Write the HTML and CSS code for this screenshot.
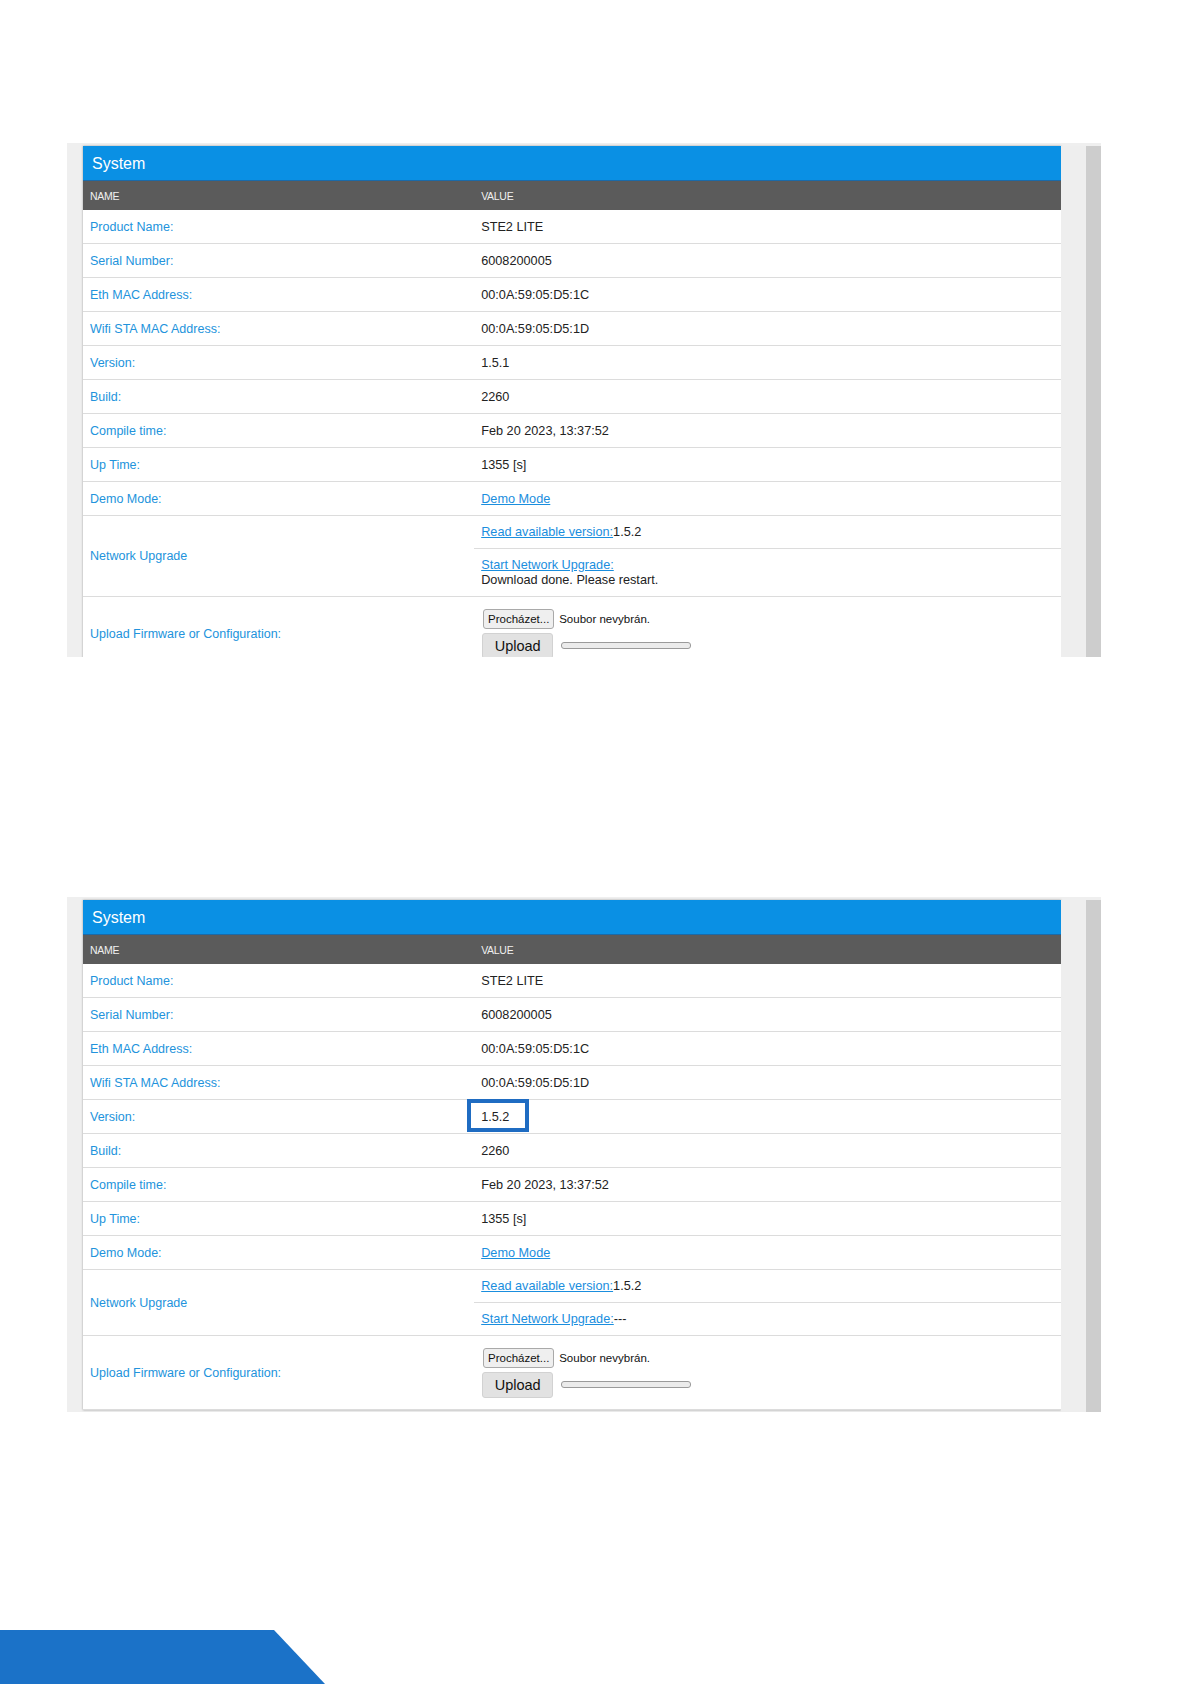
FILE: index.html
```html
<!DOCTYPE html>
<html lang="en">
<head>
  <meta charset="UTF-8" />
  <title>System</title>
  <link rel="stylesheet" href="styles.css">
</head>
<body>
<div class="page">

  <!-- screenshot 1: after network download -->
  <div class="shot shot-top">
    <div class="panel">
      <div class="panel-title">System</div>
      <div class="row head"><div class="cell">NAME</div><div class="cell">VALUE</div></div>
      <div class="row"><div class="cell name">Product Name:</div><div class="cell">STE2 LITE</div></div>
      <div class="row"><div class="cell name">Serial Number:</div><div class="cell">6008200005</div></div>
      <div class="row"><div class="cell name">Eth MAC Address:</div><div class="cell">00:0A:59:05:D5:1C</div></div>
      <div class="row"><div class="cell name">Wifi STA MAC Address:</div><div class="cell">00:0A:59:05:D5:1D</div></div>
      <div class="row"><div class="cell name">Version:</div><div class="cell">1.5.1</div></div>
      <div class="row"><div class="cell name">Build:</div><div class="cell">2260</div></div>
      <div class="row"><div class="cell name">Compile time:</div><div class="cell">Feb 20 2023, 13:37:52</div></div>
      <div class="row"><div class="cell name">Up Time:</div><div class="cell">1355 [s]</div></div>
      <div class="row"><div class="cell name">Demo Mode:</div><div class="cell"><a href="#">Demo Mode</a></div></div>
      <div class="row">
        <div class="cell name">Network Upgrade</div>
        <div class="sub">
          <div class="sub-row"><span><a href="#">Read available version:</a>1.5.2</span></div>
          <div class="sub-row tall"><span><a href="#">Start Network Upgrade:</a><br>Download done. Please restart.</span></div>
        </div>
      </div>
      <div class="row upload">
        <div class="cell name">Upload Firmware or Configuration:</div>
        <div class="cell">
          <div class="file-line"><button class="btn-browse">Procházet...</button><span class="file-note">Soubor nevybrán.</span></div>
          <div class="file-line"><button class="btn-upload">Upload</button><span class="progress"></span></div>
        </div>
      </div>
    </div>
    <div class="gutter"></div>
    <div class="scrollbar"></div>
  </div>

  <!-- screenshot 2: after restart -->
  <div class="shot shot-bottom">
    <div class="panel">
      <div class="panel-title">System</div>
      <div class="row head"><div class="cell">NAME</div><div class="cell">VALUE</div></div>
      <div class="row"><div class="cell name">Product Name:</div><div class="cell">STE2 LITE</div></div>
      <div class="row"><div class="cell name">Serial Number:</div><div class="cell">6008200005</div></div>
      <div class="row"><div class="cell name">Eth MAC Address:</div><div class="cell">00:0A:59:05:D5:1C</div></div>
      <div class="row"><div class="cell name">Wifi STA MAC Address:</div><div class="cell">00:0A:59:05:D5:1D</div></div>
      <div class="row"><div class="cell name">Version:</div><div class="cell marked">1.5.2<span class="mark"></span></div></div>
      <div class="row"><div class="cell name">Build:</div><div class="cell">2260</div></div>
      <div class="row"><div class="cell name">Compile time:</div><div class="cell">Feb 20 2023, 13:37:52</div></div>
      <div class="row"><div class="cell name">Up Time:</div><div class="cell">1355 [s]</div></div>
      <div class="row"><div class="cell name">Demo Mode:</div><div class="cell"><a href="#">Demo Mode</a></div></div>
      <div class="row">
        <div class="cell name">Network Upgrade</div>
        <div class="sub">
          <div class="sub-row"><span><a href="#">Read available version:</a>1.5.2</span></div>
          <div class="sub-row"><span><a href="#">Start Network Upgrade:</a>---</span></div>
        </div>
      </div>
      <div class="row upload">
        <div class="cell name">Upload Firmware or Configuration:</div>
        <div class="cell">
          <div class="file-line"><button class="btn-browse">Procházet...</button><span class="file-note">Soubor nevybrán.</span></div>
          <div class="file-line"><button class="btn-upload">Upload</button><span class="progress"></span></div>
        </div>
      </div>
    </div>
    <div class="gutter"></div>
    <div class="scrollbar"></div>
  </div>

  <div class="corner"></div>
</div>
</body>
</html>
```

FILE: styles.css
```css
body {
  margin: 0;
  background: #fff;
  font-family: "Liberation Sans", Arial, sans-serif;
  color: #222;
}

.page {
  height: 1684px;
  display: flex;
  flex-direction: column;
  overflow: hidden;
}

/* grey frame round each screenshot */
.shot {
  display: flex;
  width: 1034px;
  margin-left: 67px;
  padding: 3px 0 0 16px;
  box-sizing: border-box;
  background: #efefef;
  overflow: hidden;
}

.shot-top {
  margin-top: 143px;
  height: 514px;
  flex-shrink: 0;
}

.shot-bottom {
  margin-top: 240px;
  height: 515px;
  flex-shrink: 0;
}

.panel {
  flex: 1;
  background: #fff;
  box-shadow: 0 0 2px rgba(0, 0, 0, 0.35);
  align-self: flex-start;
}

.gutter {
  width: 25px;
  background: #eeeeee;
}

.scrollbar {
  width: 15px;
  background: #cdcdcd;
}

.panel-title {
  height: 35px;
  background: #0a90e4;
  color: #fff;
  font-size: 16px;
  padding-left: 9px;
  padding-top: 2px;
  display: flex;
  align-items: center;
  border-bottom: 1px solid #1b6aa8;
  box-sizing: border-box;
}

.row {
  display: grid;
  grid-template-columns: 40% 60%;
  min-height: 34px;
  border-bottom: 1px solid #dcdcdc;
  box-sizing: border-box;
}

.cell {
  display: flex;
  align-items: center;
  padding: 0 7px;
  font-size: 12.7px;
  position: relative;
}

.cell.name {
  color: #2293dc;
  font-size: 12.5px;
}

.row.head {
  min-height: 29px;
  background: #5b5b5b;
  border-bottom: none;
}

.row.head .cell {
  color: #f0f0f0;
  font-size: 10.5px;
  letter-spacing: -0.3px;
}

a {
  color: #1a8ede;
  text-decoration: underline;
}

.sub-row {
  display: flex;
  align-items: center;
  min-height: 32px;
  padding: 0 7px;
  font-size: 12.7px;
  box-sizing: border-box;
}

.sub-row + .sub-row {
  border-top: 1px solid #dcdcdc;
  min-height: 33px;
}

.sub-row.tall {
  min-height: 48px;
  line-height: 15px;
}

/* upload controls */
.row.upload .cell {
  min-height: 73px;
  flex-direction: column;
  align-items: flex-start;
  justify-content: center;
  gap: 4px;
}

.row.upload .cell.name {
  align-items: flex-start;
  justify-content: center;
}

.file-line {
  display: flex;
  align-items: center;
}

.btn-browse {
  font-family: "Liberation Sans", Arial, sans-serif;
  font-size: 11.5px;
  height: 20px;
  width: 71px;
  margin-left: 2px;
  padding: 0;
  background: #efefef;
  border: 1px solid #a9a9a9;
  border-radius: 3px;
  color: #111;
}

.file-note {
  font-size: 11.5px;
  margin-left: 5px;
  color: #111;
}

.btn-upload {
  font-family: "Liberation Sans", Arial, sans-serif;
  font-size: 14.5px;
  height: 26px;
  width: 71px;
  margin-left: 1px;
  padding: 0;
  background: #e2e2e2;
  border: 1px solid #d2d2d2;
  border-radius: 3px;
  color: #111;
}

.progress {
  width: 128px;
  height: 5px;
  margin-left: 8px;
  border: 1px solid #9a9a9a;
  border-radius: 3px;
  background: #ebebeb;
}

/* highlight drawn over the version value */
.mark {
  position: absolute;
  left: -7px;
  top: -1px;
  width: 62px;
  height: 33px;
  border: 4px solid #1f6cc2;
  box-sizing: border-box;
}

.corner {
  margin-top: auto;
  flex-shrink: 0;
  width: 325px;
  height: 54px;
  background: #1b72c8;
  clip-path: polygon(0 0, 274px 0, 100% 100%, 0 100%);
}
```
